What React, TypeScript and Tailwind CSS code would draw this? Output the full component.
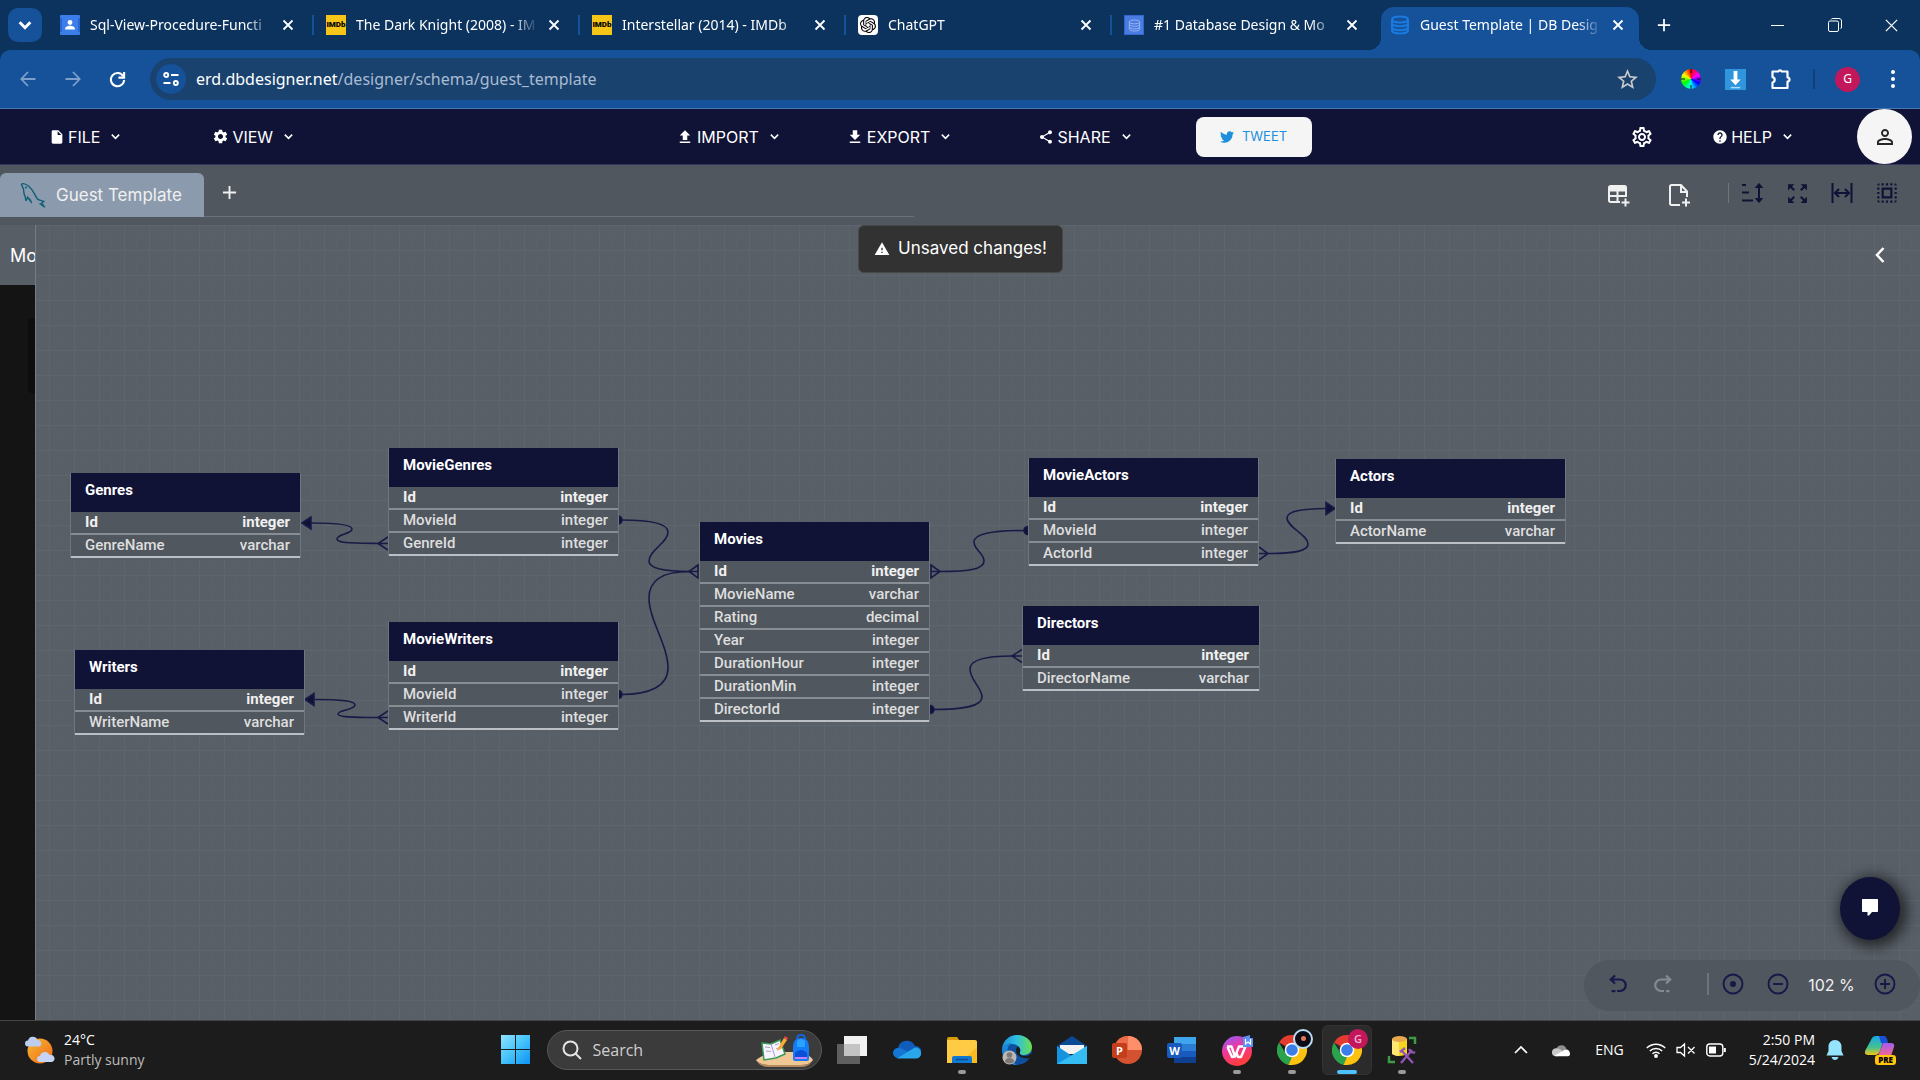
import React from "react";
import {
  MdInsertDriveFile, MdSettings, MdOutlineSettings, MdUpload, MdDownload, MdShare, MdHelp,
  MdWarning, MdZoomOutMap, MdSelectAll, MdPersonOutline, MdStarBorder,
} from "react-icons/md";
import { FaTwitter } from "react-icons/fa";
import { SiOpenai } from "react-icons/si";

type Svg = { className?: string };

const BROWSER = "font-['Noto_Sans','Open_Sans',sans-serif]";
const SYSTEM = "font-['Open_Sans','Noto_Sans',sans-serif]";
const APP = "font-['Inter','Open_Sans',sans-serif]";

/* ---------- favicons ---------- */
const ContactFavicon = () => (
  <svg viewBox="0 0 20 20" className="size-5">
    <rect width="20" height="20" rx="1" fill="#3b7de9" />
    <rect y="3" width="20" height="14" fill="#2a66d0" />
    <rect x="2" y="1" width="16" height="18" fill="#3b7de9" />
    <circle cx="10" cy="7.5" r="2.4" fill="#fff" />
    <path d="M5 14.5c0-3 2.6-3.8 5-3.8s5 .8 5 3.8z" fill="#fff" />
  </svg>
);
const ImdbFavicon = () => (
  <span className="flex size-5 items-center justify-center bg-[#f5c518] font-[Roboto,sans-serif] text-[8px] leading-none font-black text-black">IMDb</span>
);
const ChatGptFavicon = () => (
  <span className="flex size-5 items-center justify-center rounded-[4px] bg-white text-black"><SiOpenai size={16} /></span>
);
const Stack = ({ className }: Svg) => (
  <svg viewBox="0 0 20 20" className={className} fill="none" stroke="currentColor">
    <ellipse cx="10" cy="4.5" rx="8" ry="3" />
    <path d="M2 4.500v3.700c0 1.700 3.600 3 8 3s8-1.300 8-3V4.500M2 8.500v3.700c0 1.700 3.600 3 8 3s8-1.300 8-3V8.500M2 12.300v3.200c0 1.700 3.600 3 8 3s8-1.300 8-3v-3.200" />
  </svg>
);
const DesignFavicon = () => (
  <span className="flex size-5 items-center justify-center border border-[#3565cf] bg-[#4a7be0] text-[#b9d0ff]"><Stack className="size-[13px]" /></span>
);
const DbFavicon = () => <Stack className="size-5 stroke-2 text-[#1a7ae0]" />;

const Close = ({ className }: Svg) => (
  <svg viewBox="0 0 12 12" className={className} fill="none" stroke="currentColor" strokeWidth="1.8">
    <path d="M1.500 1.500l9 9M10.500 1.500l-9 9" />
  </svg>
);
const Down = ({ className }: Svg) => (
  <svg viewBox="0 0 12 12" className={className} fill="none" stroke="currentColor" strokeWidth="1.700">
    <path d="M2 4l4 4 4-4" />
  </svg>
);
const Plus = ({ className }: Svg) => (
  <svg viewBox="0 0 16 16" className={className} fill="none" stroke="currentColor" strokeWidth="2">
    <path d="M8 1v14M1 8h14" />
  </svg>
);

/* ---------- browser ---------- */
const TABS = [
  { title: "Sql-View-Procedure-Functi", icon: <ContactFavicon /> },
  { title: "The Dark Knight (2008) - IM", icon: <ImdbFavicon /> },
  { title: "Interstellar (2014) - IMDb", icon: <ImdbFavicon /> },
  { title: "ChatGPT", icon: <ChatGptFavicon /> },
  { title: "#1 Database Design & Mo", icon: <DesignFavicon /> },
  { title: "Guest Template | DB Desig", icon: <DbFavicon />, active: true },
];

function TabStrip() {
  return (
    <div className={"flex h-[50px] items-stretch bg-[#0c335e] pl-2 text-white " + BROWSER}>
      <button aria-label="Search tabs" className="mt-2 mr-[6px] flex h-[34px] w-[34px] items-center justify-center rounded-[10px] bg-[#15529a]">
        <Down className="size-4 stroke-[2.200]" />
      </button>
      {TABS.map((t, i) => (
        <div key={i} className="relative flex w-[266px] min-w-0 items-stretch">
          {t.active && (
            <>
              <span className="absolute inset-y-0 right-[5px] left-[3px] mt-[7px] rounded-t-[13px] bg-[#15529a]" />
              <span className="absolute bottom-0 left-[-9px] size-3 bg-[radial-gradient(circle_at_0_0,transparent_12px,#15529a_12px)]" />
              <span className="absolute right-[-7px] bottom-0 size-3 bg-[radial-gradient(circle_at_100%_0,transparent_12px,#15529a_12px)]" />
            </>
          )}
          <div className="relative flex min-w-0 flex-1 items-center pr-4 pl-3">
            <span className="shrink-0">{t.icon}</span>
            <span className="ml-[10px] min-w-0 flex-1 overflow-hidden text-[14px] leading-5 whitespace-nowrap [mask-image:linear-gradient(to_right,black_86%,transparent)]">
              {t.title}
            </span>
            <button aria-label={"Close " + t.title} className="ml-2 flex size-4 shrink-0 items-center justify-center"><Close className="size-3" /></button>
          </div>
          <span className={"my-[15px] w-[2px] shrink-0 " + (i < 4 ? "bg-[#15529a]" : "")} />
        </div>
      ))}
      <button aria-label="New tab" className="ml-1 flex w-8 items-center justify-center"><Plus className="size-[14px]" /></button>
      <div className="ml-auto flex">
        <button aria-label="Minimize" className="flex w-[57px] items-center justify-center"><span className="h-px w-[13px] bg-white" /></button>
        <button aria-label="Restore" className="flex w-[57px] items-center justify-center">
          <svg viewBox="0 0 14 14" className="size-[14px]" fill="none" stroke="currentColor"><rect x=".5" y="3" width="10" height="10.500" rx="1.500" /><path d="M3 1.500c.3-.7 1-1 1.800-1H11c1.500 0 2.500 1 2.500 2.500v6c0 .8-.4 1.500-1 1.800" /></svg>
        </button>
        <button aria-label="Close window" className="flex w-[57px] items-center justify-center"><Close className="size-[15px] stroke-1" /></button>
      </div>
    </div>
  );
}

const Slot = ({ label, children, className = "" }: { label: string; children: React.ReactNode; className?: string }) => (
  <button aria-label={label} className={"flex h-[42px] w-[45px] shrink-0 items-center justify-center " + className}>{children}</button>
);

function AddressBar() {
  return (
    <div className={"bg-[#0c335e] " + BROWSER}>
      <div className="flex h-[59px] items-center rounded-t-[10px] border-b border-[#4377b4] bg-[#15529a] px-[5px] text-white">
        <Slot label="Back" className="text-[#7d9fca]">
          <svg viewBox="0 0 16 16" className="size-4" fill="none" stroke="currentColor" strokeWidth="1.800"><path d="M15.500 8H1.500M8 1L1.300 8 8 15" /></svg>
        </Slot>
        <Slot label="Forward" className="text-[#7d9fca]">
          <svg viewBox="0 0 16 16" className="size-4" fill="none" stroke="currentColor" strokeWidth="1.800"><path d="M.5 8h14M8 1l6.700 7L8 15" /></svg>
        </Slot>
        <Slot label="Reload">
          <svg viewBox="0 0 18 18" className="size-[17px]" fill="none" stroke="currentColor" strokeWidth="2.200"><path d="M15 5.500A7 7 0 1 0 16 9.500" /><path d="M16 1v6h-6" /></svg>
        </Slot>
        <div className="ml-[10px] flex h-[42px] min-w-0 flex-1 items-center rounded-full bg-[#19426f] pr-4 pl-[6px]">
          <button aria-label="Site information" className="flex size-[30px] items-center justify-center rounded-full bg-[#15529a]">
            <svg viewBox="0 0 16 16" className="size-4" fill="none" stroke="currentColor" strokeWidth="1.900"><circle cx="3.200" cy="4" r="2" /><path d="M8 4h7.500M.5 12h7" /><circle cx="12.800" cy="12" r="2" /></svg>
          </button>
          <label htmlFor="url" className="ml-[10px] text-[16px] leading-6">erd.dbdesigner.net</label>
          <input id="url" defaultValue="/designer/schema/guest_template" className="min-w-0 flex-1 bg-transparent text-[16px] leading-6 text-[#a9bbd1] outline-none" />
          <button aria-label="Bookmark"><MdStarBorder size={25} className="text-[#c8c9cc]" /></button>
        </div>
        <Slot label="Color picker" className="ml-3">
          <span className="flex size-5 items-center justify-center rounded-full bg-[conic-gradient(#f00,#f0f,#00f,#0ff,#0f0,#ff0,#f00)]">
            <svg viewBox="0 0 20 20" className="size-5" stroke="#111"><path d="M10 0v4M10 16v4M0 10h4M16 10h4" /></svg>
          </span>
        </Slot>
        <Slot label="Download extension">
          <svg viewBox="0 0 22 22" className="size-[21px]"><rect width="22" height="22" fill="#2f95dc" /><path d="M9 2h4v9h3.500L11 17l-5.500-6H9z" fill="#fff" /><path d="M6 19.500h10" stroke="#a8dcff" strokeWidth="1.500" /></svg>
        </Slot>
        <Slot label="Extensions">
          <svg viewBox="0 0 22 22" className="size-[22px]" fill="none" stroke="currentColor" strokeWidth="2.200" strokeLinejoin="round">
            <path d="M2.500 3.500h5.700a2 2 0 0 1 3.600 0h5.700v6a2 2 0 0 1 0 4v6.500h-15v-5.500a2.700 2.700 0 0 0 0-5.300z" />
          </svg>
        </Slot>
        <span className="mx-[10px] h-5 w-[2px] bg-[#0f4178]" />
        <Slot label="Profile"><span className="flex size-[25px] items-center justify-center rounded-full bg-[#c2185b] text-[12px] leading-none">G</span></Slot>
        <Slot label="Menu">
          <svg viewBox="0 0 4 18" className="h-[18px] w-1" fill="currentColor"><circle cx="2" cy="2" r="2" /><circle cx="2" cy="9" r="2" /><circle cx="2" cy="16" r="2" /></svg>
        </Slot>
      </div>
    </div>
  );
}

/* ---------- application header ---------- */
const MenuButton = ({ icon, label }: { icon: React.ReactNode; label: string }) => (
  <button className="flex items-center text-[16px] leading-6 text-white">
    {icon}
    <span className="ml-[3px]">{label}</span>
    <Down className="ml-[10px] size-[11px]" />
  </button>
);

function AppHeader() {
  return (
    <header className="flex h-14 items-center border-b border-[#34365a] bg-[#101236]">
      <nav className="flex w-[35%] shrink-0 items-center gap-[91px] pl-[49px]">
        <MenuButton icon={<MdInsertDriveFile size={16} />} label="FILE" />
        <MenuButton icon={<MdSettings size={17} />} label="VIEW" />
      </nav>
      <nav className="flex items-center pl-1">
        <MenuButton icon={<MdUpload size={18} />} label="IMPORT" />
        <span className="w-[66px]" />
        <MenuButton icon={<MdDownload size={18} />} label="EXPORT" />
        <span className="w-[87px]" />
        <MenuButton icon={<MdShare size={16} />} label="SHARE" />
        <button className="ml-16 flex h-10 w-[116px] items-center justify-center gap-2 rounded-lg bg-[#f5f5f5] text-[13px] text-[#1d8fdc]">
          <FaTwitter size={14} />TWEET
        </button>
      </nav>
      <div className="ml-auto flex items-center pr-2">
        <button aria-label="Settings" className="mr-[58px] text-white"><MdOutlineSettings size={24} /></button>
        <MenuButton icon={<MdHelp size={16} />} label="HELP" />
        <button aria-label="Account" className="ml-16 flex size-[55px] items-center justify-center rounded-full bg-[#f5f5f5] text-[#262626]">
          <MdPersonOutline size={24} />
        </button>
      </div>
    </header>
  );
}

function SchemaBar() {
  return (
    <div className="flex h-[60px] items-start bg-[#50575e] pt-2 text-[#f0f0f0]">
      <div className="flex w-[47.6%] items-start">
        <button className="flex h-[44px] w-[204px] items-center rounded-t-md bg-[#8b9bad] pl-5 text-[17px]">
          <svg viewBox="0 0 26 26" className="size-[26px] shrink-0" fill="none" stroke="#115e78" strokeWidth="1.400" strokeLinejoin="round">
            <path d="M1.500 2c2-1 5 .5 7 2 5 4 6 9 9 13 1.500 1.500 4 1.500 6.500 2.500l-2.500 1.500 3 4-5-3.500M1.500 2c0 2 1.500 3 2 5 .5 3 0 5 1.500 7 .5 1.500.5 3.500 1 4.500 1 0 1-2 1.500-3.500l4 5.500-2-4" />
            <circle cx="6" cy="5.500" r=".4" />
          </svg>
          <span className="mt-[2px] ml-[10px]">Guest Template</span>
        </button>
        <div className="flex h-[44px] flex-1 items-center border-b border-[#6a717a] pb-1 pl-[18px]">
          <button aria-label="Add schema"><Plus className="size-[15px]" /></button>
        </div>
      </div>
      <div className="ml-auto flex h-[44px] items-center pr-5 pb-1 text-[#101236]">
        <button aria-label="Add table" className="mt-1 text-[#f0f0f0]">
          <svg viewBox="0 0 24 24" className="size-6" fill="none" stroke="currentColor" strokeWidth="2"><path d="M14 19H4.500c-.8 0-1.500-.7-1.500-1.500v-13C3 3.700 3.700 3 4.500 3h14c.8 0 1.500.7 1.500 1.500V14M3 13h17M11.500 6v13M3 7.500h17" /><path d="M3 5h17" strokeWidth="4" /><path d="M19.500 15.500v8M15.500 19.500h8" /></svg>
        </button>
        <button aria-label="Add note" className="mt-1 ml-[37px] text-[#f0f0f0]">
          <svg viewBox="0 0 24 24" className="size-6" fill="none" stroke="currentColor" strokeWidth="2"><path d="M13 22H4.500c-.8 0-1.500-.7-1.500-1.500v-17C3 2.700 3.700 2 4.500 2H14l6 6.500V14M14 2v7h6M19 15.500v8M15 19.500h8" /></svg>
        </button>
        <span className="ml-[37px] h-5 w-px bg-[#6f767e]" />
        <button aria-label="Vertical spacing" className="ml-3">
          <svg viewBox="0 0 22 22" className="size-[22px]" fill="none" stroke="currentColor" strokeWidth="2"><path d="M1 3h4M1 10.500h7M1 18.500h11M18 2v18" /><path d="M14.500 5.500L18 1.500l3.500 4zM14.500 16.500l3.500 4 3.500-4z" fill="currentColor" strokeWidth="1" /></svg>
        </button>
        <button aria-label="Full screen" className="ml-[22px]"><MdZoomOutMap size={25} /></button>
        <button aria-label="Fit width" className="ml-[21px]">
          <svg viewBox="0 0 22 22" className="size-[22px]" fill="none" stroke="currentColor" strokeWidth="2"><path d="M1.500 1v20M20.500 1v20M4.500 11h13M8 7l-4 4 4 4M14 7l4 4-4 4" /></svg>
        </button>
        <button aria-label="Select all" className="ml-[21px]"><MdSelectAll size={26} /></button>
      </div>
    </div>
  );
}

/* ---------- diagram ---------- */
type Col = [string, string];
const NODES: { name: string; x: number; y: number; w: number; cols: Col[] }[] = [
  { name: "Genres", x: 70, y: 473, w: 231, cols: [["Id", "integer"], ["GenreName", "varchar"]] },
  { name: "Writers", x: 74, y: 650, w: 231, cols: [["Id", "integer"], ["WriterName", "varchar"]] },
  { name: "MovieGenres", x: 388, y: 448, w: 231, cols: [["Id", "integer"], ["MovieId", "integer"], ["GenreId", "integer"]] },
  { name: "MovieWriters", x: 388, y: 622, w: 231, cols: [["Id", "integer"], ["MovieId", "integer"], ["WriterId", "integer"]] },
  { name: "Movies", x: 699, y: 522, w: 231, cols: [["Id", "integer"], ["MovieName", "varchar"], ["Rating", "decimal"], ["Year", "integer"], ["DurationHour", "integer"], ["DurationMin", "integer"], ["DirectorId", "integer"]] },
  { name: "MovieActors", x: 1028, y: 458, w: 231, cols: [["Id", "integer"], ["MovieId", "integer"], ["ActorId", "integer"]] },
  { name: "Actors", x: 1335, y: 459, w: 231, cols: [["Id", "integer"], ["ActorName", "varchar"]] },
  { name: "Directors", x: 1022, y: 606, w: 238, cols: [["Id", "integer"], ["DirectorName", "varchar"]] },
];
const ORIGIN = { x: 36, y: 225 };

const Relations = () => (
  <svg className="pointer-events-none absolute inset-0 size-full" fill="none" stroke="#191b47" strokeWidth="1.600">
    <g transform={`translate(${-ORIGIN.x} ${-ORIGIN.y})`}>
      <path d="M311 523C340 523 352 525 352 529C352 534 337 534 337 539C337 543 350 543 378 543.500" />
      <path d="M315 699.500C342 699.500 355 701 355 705C355 710 338 710 338 714C338 717 352 717.500 378 717.500" />
      <path d="M621 520C650 520 668 523 668 532C668 543 649 550 649 561C649 569 668 571.500 690 571.500" />
      <path d="M621 694.500C650 694.500 668 686 668 668C668 645 649 620 649 598C649 580 662 571.500 690 571.500" />
      <path d="M940 571.500C970 571.500 984 569 984 561C984 553 974 550 974 542C974 534 990 530.500 1026 530.500" />
      <path d="M932 709.500C965 709.500 982 706 982 697C982 688 970 680 970 669C970 660 984 656 1012 656" />
      <path d="M1268 553.500C1295 553.500 1308 551 1308 544C1308 535 1287 527 1287 518C1287 510 1305 509 1326 508.500" />
      <g fill="#101236">
        <path d="M302 523l9-6v12zM305 699.500l9-6v12zM1335 508.500l-9-6v12z" />
        <path d="M618 516a4 4 0 0 1 0 8zM618 690.500a4 4 0 0 1 0 8zM930 705.500a4 4 0 0 1 0 8zM1028 526.500a4 4 0 0 0 0 8z" />
      </g>
      <path d="M388 537l-10 6.500 10 6.500M378 543.500h10M388 711l-10 6.500 10 6.500M378 717.500h10" />
      <path d="M698 565l-9 6.500 9 6.500zM689 571.500h9M931 565l9 6.500-9 6.500zM940 571.500h-9" />
      <path d="M1022 649.500l-10 6.500 10 6.500M1012 656h10M1259 547l9 6.500-9 6.500M1268 553.500h-9" />
    </g>
  </svg>
);

function Entity({ n }: { n: (typeof NODES)[number] }) {
  return (
    <section
      className="absolute border-x border-[#6f767e] bg-[#50575e] font-[Roboto,sans-serif] text-[15px] text-[#dedede]"
      style={{ left: n.x - ORIGIN.x, top: n.y - ORIGIN.y, width: n.w }}
    >
      <h2 className="flex h-[39px] items-center bg-[#101236] px-[14px] pb-1 font-bold text-white">{n.name}</h2>
      <table className="w-full border-separate border-spacing-0">
        <tbody>
          {n.cols.map(([c, t], i) => (
            <tr key={c} className={"leading-[21px] " + (i === 0 ? "font-bold text-[#f0f0f0]" : "font-medium")}>
              <td className={"border-b-2 py-0 pl-[14px] " + (i === n.cols.length - 1 ? "border-[#bcc0c4]" : "border-[#888d94]")}>{c}</td>
              <td className={"border-b-2 py-0 pr-[10px] text-right " + (i === n.cols.length - 1 ? "border-[#bcc0c4]" : "border-[#888d94]")}>{t}</td>
            </tr>
          ))}
        </tbody>
      </table>
    </section>
  );
}

function Canvas() {
  return (
    <main className="flex min-h-[600px] flex-1">
      <aside className="flex w-9 shrink-0 flex-col overflow-hidden border-r border-[#757c85] bg-[#141414]">
        <div className="flex h-[60px] items-center overflow-hidden bg-[#575e66] pl-[10px] text-[18px] whitespace-nowrap text-white">Mo</div>
        <div className="mt-[33px] ml-7 h-[75px] rounded-l bg-[#0d0d0e]" />
      </aside>
      <div className="relative min-w-0 flex-1 overflow-hidden bg-[#585f67] bg-[linear-gradient(#5e656d_1px,transparent_1px),linear-gradient(90deg,#5e656d_1px,transparent_1px),linear-gradient(transparent_12px,#5a616a_12px,#5a616a_13px,transparent_13px),linear-gradient(90deg,transparent_12px,#5a616a_12px,#5a616a_13px,transparent_13px)] bg-size-[25px_25px] bg-position-[13px_0]">
        <Relations />
        {NODES.map((n) => <Entity key={n.name} n={n} />)}
        <div role="status" className="absolute top-0 left-[822px] flex h-12 w-[205px] items-center justify-center gap-2 rounded-md border border-[#484848] bg-[#323232] text-[17px] text-white">
          <MdWarning size={16} />Unsaved changes!
        </div>
        <button aria-label="Open side panel" className="absolute top-[21px] right-[35px] text-white">
          <svg viewBox="0 0 10 18" className="h-[18px] w-[10px]" fill="none" stroke="currentColor" strokeWidth="2.500"><path d="M8.500 2L2 9l6.500 7" /></svg>
        </button>
        <button aria-label="Chat" className="absolute right-5 bottom-20 flex h-[63px] w-[60px] items-center justify-center rounded-[50%] bg-[#101236] pb-1 shadow-[3px_3px_14px_4px_rgba(0,0,0,0.6)]">
          <svg viewBox="0 0 18 18" className="size-[18px]" fill="#fff"><path d="M2 1h14c.6 0 1 .4 1 1v11c0 .6-.4 1-1 1h-5l-3 3.500h-1.500V14H2c-.6 0-1-.4-1-1V2c0-.6.4-1 1-1z" /></svg>
        </button>
        <div className="absolute right-0 bottom-[9px] flex h-[51px] w-[336px] items-center rounded-full bg-[#50575e] pr-6 pb-1 pl-[25px] text-[#17194a]">
          <button aria-label="Undo">
            <svg viewBox="0 0 18 20" className="h-5 w-[18px]" fill="none" stroke="currentColor" strokeWidth="2.200"><path d="M6 1.500L1.800 5.500 6 9.500M2 5.500h9a5.500 5.500 0 0 1 0 11.500H8" /><path d="M5.500 17.200h-2" strokeLinecap="round" strokeDasharray="2 3" /></svg>
          </button>
          <button aria-label="Redo" className="ml-[27px] text-[#858b93]">
            <svg viewBox="0 0 18 20" className="h-5 w-[18px]" fill="none" stroke="currentColor" strokeWidth="2.200"><path d="M12 1.500l4.200 4-4.200 4M16 5.500H7a5.500 5.500 0 0 0 0 11.500h3" /><path d="M13 17.200h1.500" strokeLinecap="round" /></svg>
          </button>
          <span className="ml-[35px] h-[22px] w-[2px] bg-[#6d747c]" />
          <button aria-label="Center" className="ml-[13px]">
            <svg viewBox="0 0 22 22" className="size-[22px]" fill="none" stroke="currentColor" strokeWidth="1.900"><circle cx="11" cy="11" r="9.500" /><circle cx="11" cy="11" r="3" fill="currentColor" stroke="none" /></svg>
          </button>
          <button aria-label="Zoom out" className="ml-[23px]">
            <svg viewBox="0 0 22 22" className="size-[22px]" fill="none" stroke="currentColor" strokeWidth="1.900"><circle cx="11" cy="11" r="9.500" /><path d="M6 11h10" /></svg>
          </button>
          <span className="mt-[2px] flex-1 text-center text-[16px] text-[#f0f0f0]">102 %</span>
          <button aria-label="Zoom in">
            <svg viewBox="0 0 22 22" className="size-[22px]" fill="none" stroke="currentColor" strokeWidth="1.900"><circle cx="11" cy="11" r="9.500" /><path d="M6 11h10M11 6v10" /></svg>
          </button>
        </div>
      </div>
    </main>
  );
}

/* ---------- taskbar ---------- */
const Weather = () => (
  <svg viewBox="0 0 30 30" className="size-[30px]">
    <defs><linearGradient id="sun" x1="0" y1="0" x2="1" y2="1"><stop stopColor="#f7b733" /><stop offset="1" stopColor="#f06a1a" /></linearGradient></defs>
    <circle cx="15" cy="16" r="12.500" fill="url(#sun)" />
    <path d="M3 11.500a3 3 0 0 1 0-6 5 5 0 0 1 9.500-.5 3.500 3.500 0 0 1 2 6.500z" fill="#bccdf0" />
    <path d="M15 27a3 3 0 0 1 0-6 5 5 0 0 1 9.500-1 3.500 3.500 0 0 1 2.500 7z" fill="#c5d4f4" />
  </svg>
);
const Start = () => (
  <svg viewBox="0 0 29 29" className="size-[29px]">
    <defs><linearGradient id="win" x1="0" y1="0" x2="1" y2="1"><stop stopColor="#8fe3ff" /><stop offset=".5" stopColor="#45c3fb" /><stop offset="1" stopColor="#0c93f5" /></linearGradient></defs>
    <path d="M0 0h14v14H0zM15 0h14v14H15zM0 15h14v14H0zM15 15h14v14H15z" fill="url(#win)" />
  </svg>
);
const SearchArt = () => (
  <svg viewBox="0 0 58 34" className="h-[34px] w-[58px]">
    <path d="M0 27q8-7 25-8h20q9 3 12 8-3 5-12 5H12Q3 32 0 27z" fill="#f0c795" /><path d="M1 28q5 4 12 4h32q8 0 11-4-3 6-11 6H13Q4 34 1 28z" fill="#b58a5e" />
    <path d="M6 10l9 1 9-4 5 14-9 4-12 2z" fill="#f7f4ff" stroke="#3c9a56" strokeWidth="1.500" /><path d="M15 11l4 13M9 14l5 .5M10 18l5 .5M19 12l4-1.500M20 16l5-2" stroke="#a79ec0" />
    <path d="M22 15l6-10 3 2-6 9-4 2z" fill="#fbab35" /><path d="M28 5l1-2 3 2-1 2z" fill="#ee4540" />
    <path d="M41 6q0-4 4-4t4 4" fill="none" stroke="#1565d8" strokeWidth="2" /><path d="M37 14q0-9 8-9t8 9v12q0 2-2 2H39q-2 0-2-2z" fill="#157cf5" /><path d="M41 8q4-4 8 0v6h-8z" fill="#29a3ff" /><path d="M39 20q6-6 12 0v5q-6 2-12 0z" fill="#0b4fd8" /><path d="M39 25h12" stroke="#c77dff" strokeWidth="2" />
  </svg>
);
const TaskView = () => (
  <svg viewBox="0 0 30 30" className="size-[30px]"><rect y="9" width="23" height="20" fill="#5f5f5f" /><rect x="7" y="1" width="23" height="20" fill="#f1f1f1" /><rect x="7" y="9" width="16" height="12" fill="#c4c4c4" /></svg>
);
const OneDrive = () => (
  <svg viewBox="0 0 28 20" className="h-5 w-7"><path d="M5 18a5 5 0 0 1 0-10 9 9 0 0 1 17-2 6 6 0 0 1 1 12z" fill="#0f5db8" /><path d="M0 13a6 6 0 0 1 6-5q3 0 9 4L6 18q-5 0-6-5z" fill="#1477d3" /><path d="M4 18.500L16 11l6-3.500c8 0 8 11 1 11z" fill="#28a8ea" /></svg>
);
const Explorer = () => (
  <svg viewBox="0 0 30 30" className="size-[30px]"><path d="M0 4q0-2 2-2h8l3 4H0z" fill="#d79b0b" /><path d="M0 5h28q2 0 2 2v21H0z" fill="#ffcb45" /><path d="M13 28h17V12z" fill="#f9bb20" /><path d="M5 28v-5q0-2 2-2h16q2 0 2 2v5z" fill="#0f78d0" /><path d="M9 24.500h12" stroke="#0a4d92" strokeWidth="1.500" /></svg>
);
const Edge = () => (
  <svg viewBox="0 0 30 30" className="size-[30px]">
    <defs><linearGradient id="edge"><stop stopColor="#1a90dc" /><stop offset=".5" stopColor="#30bfe0" /><stop offset="1" stopColor="#6be04a" /></linearGradient></defs>
    <circle cx="15" cy="15" r="15" fill="#0e4f9f" /><path d="M0 14C1 5 8 0 15 0c9 0 15 6 15 12 0 5-4 8-8 8-3 0-5-1-4-3 1-4-3-8-8-8-5 0-9 3-10 5z" fill="url(#edge)" />
    <path d="M0 14c1-4 5-6 10-6-4 2-5 6-4 10 1 5 4 9 9 12C6 30 0 23 0 14z" fill="#1b86d6" /><path d="M18 17c-1 2 1 4 5 4 3 0 5-1 6-3l1 2-2 3c-6 1-14-1-14-8 0-2 1-3 2-4 2 2 3 4 2 6z" fill="#1c1c1c" />
    <circle cx="7.500" cy="22.500" r="7" fill="#bcb8b5" /><circle cx="7.500" cy="20" r="2.800" fill="#7d7976" /><path d="M3 27q0-4 4.500-4t4.500 4q-4 3-9 0z" fill="#7d7976" />
  </svg>
);
const Mail = () => (
  <svg viewBox="0 0 30 30" className="size-[30px]"><path d="M0 11L15 1l15 10v5H0z" fill="#0a4a94" /><path d="M3 10h24v9H3z" fill="#f2f2f2" /><path d="M0 11l15 10L30 11v18H0z" fill="#1593de" /><path d="M0 29l15-9 15-9v18z" fill="#33bdf2" /></svg>
);
const OfficeBadge = ({ children, className }: { children: React.ReactNode; className: string }) => (
  <span className={"absolute top-[8px] left-0 flex size-[15px] items-center justify-center rounded-[2px] text-[11px] leading-none font-bold text-white " + className}>{children}</span>
);
const PowerPoint = () => (
  <span className="relative block size-[30px]">
    <svg viewBox="0 0 30 30" className="size-[30px]"><circle cx="16" cy="15" r="14" fill="#d35230" /><path d="M16 1a14 14 0 0 1 14 14H16z" fill="#ff8f6b" /><path d="M16 1v14H2A14 14 0 0 1 16 1z" fill="#ed6c47" /></svg>
    <OfficeBadge className="bg-[#c43e1c]">P</OfficeBadge>
  </span>
);
const Word = () => (
  <span className="relative block size-[30px]">
    <svg viewBox="0 0 30 30" className="size-[30px]"><path d="M7 2h22v7H7z" fill="#41a5ee" /><path d="M7 9h22v7H7z" fill="#2b7cd3" /><path d="M7 16h22v6H7z" fill="#185abd" /><path d="M7 22h22v6H7z" fill="#103f91" /></svg>
    <OfficeBadge className="bg-[#185abd]">W</OfficeBadge>
  </span>
);
const Wps = () => (
  <svg viewBox="0 0 32 32" className="size-8">
    <defs><linearGradient id="wps" x1="0" y1="0" x2=".4" y2="1"><stop stopColor="#8a5cff" /><stop offset=".5" stopColor="#f0389c" /><stop offset="1" stopColor="#ff3d3d" /></linearGradient></defs>
    <circle cx="16" cy="17" r="15" fill="url(#wps)" />
    <path d="M6 12.500h4.500l3.500 10 4-10h6.500l-4.500 10.500h-3l-1.500-4M14 22.500l-3 .5-4.500-10" fill="none" stroke="#fff" strokeWidth="2.400" strokeLinejoin="round" />
    <path d="M22 3l7-2v3h3v9H22z" fill="#5b8ff5" /><path d="M24.500 5v5l2.500-2 2.500 2V5" fill="none" stroke="#fff" strokeWidth="1.200" />
  </svg>
);
const ChromeMark = () => (
  <svg viewBox="0 0 30 30" className="size-[30px]">
    <path d="M15 15L2 7.500A15 15 0 0 1 28 7.500z" fill="#e33b2e" /><path d="M15 0a15 15 0 0 1 13 7.500H15z" fill="#e33b2e" />
    <path d="M15 15l13-7.500A15 15 0 0 1 15 30l-1 0z" fill="#fdc10f" /><path d="M2 7.500L9 19l6 3-3 8A15 15 0 0 1 2 7.500z" fill="#2ba24c" />
    <path d="M15 22l6.500-3L15 30h-3.500z" fill="#fdc10f" /><circle cx="15" cy="15" r="7.300" fill="#fff" /><circle cx="15" cy="15" r="5.800" fill="#3b7de9" />
  </svg>
);
const Chrome = ({ user }: { user?: boolean }) => (
  <span className="relative block">
    <ChromeMark />
    {user ? (
      <span className="absolute -top-[6px] left-4 flex size-5 items-center justify-center rounded-full bg-[#c2185b] text-[11px] leading-none font-semibold text-[#f3b6cd]">G</span>
    ) : (
      <span className="absolute -top-[6px] left-4 flex size-5 items-center justify-center rounded-full border-2 border-[#b9dcf5] bg-[#0c0c18]"><span className="size-[5px] rounded-full bg-[#e07a5a]" /></span>
    )}
  </span>
);
const SqlTool = () => (
  <svg viewBox="0 0 30 30" className="size-[30px]"><path d="M5 4v15q7 4 15 0V4z" fill="#f7d51c" /><path d="M5 4v15q3 2 7 2V4z" fill="#ffe873" /><ellipse cx="12.500" cy="4" rx="7.500" ry="3" fill="#e8a64d" /><path d="M22 3h6v6M2 21v6h6" fill="none" stroke="#3d9b45" strokeWidth="2.500" /><path d="M15 16l11 12M25 15L14 28M13 17l5-4M22 14q3 5 6 3" fill="none" stroke="#9455b8" strokeWidth="2.300" /></svg>
);

const APPS: { label: string; icon: React.ReactNode; state?: "open" | "active" }[] = [
  { label: "Task view", icon: <TaskView /> },
  { label: "OneDrive", icon: <OneDrive /> },
  { label: "File Explorer", icon: <Explorer />, state: "open" },
  { label: "Edge", icon: <Edge /> },
  { label: "Mail", icon: <Mail /> },
  { label: "PowerPoint", icon: <PowerPoint /> },
  { label: "Word", icon: <Word /> },
  { label: "WPS Office", icon: <Wps />, state: "open" },
  { label: "Chrome", icon: <Chrome />, state: "open" },
  { label: "Chrome, profile G", icon: <Chrome user />, state: "active" },
  { label: "SQL tools", icon: <SqlTool />, state: "open" },
];

function Taskbar() {
  return (
    <footer className="flex h-[60px] items-stretch border-t border-[#444] bg-[#1c1c1c] pb-[2px] text-white">
      <div className="flex flex-1 items-center pl-[25px]">
        <Weather />
        <div className="ml-[9px] text-[14px] leading-5"><div>24°C</div><div className="text-[#bdbdbd]">Partly sunny</div></div>
      </div>
      <div className="flex items-center pl-[10px]">
        <button aria-label="Start"><Start /></button>
        <label className="mr-[3px] ml-[17px] flex h-10 w-[275px] items-center rounded-full border border-[#575757] bg-[#3b3b3b] pr-[7px] pl-[14px]">
          <svg viewBox="0 0 20 20" className="size-5 shrink-0" fill="none" stroke="#e4e4e4" strokeWidth="2"><circle cx="8.500" cy="8.500" r="7" /><path d="M13.500 13.500L19 19" /></svg>
          <input aria-label="Search" placeholder="Search" className="ml-[11px] min-w-0 flex-1 bg-transparent text-[16px] leading-5 outline-none placeholder:text-[#cfcfcf]" />
          <SearchArt />
        </label>
        {APPS.map((a) => (
          <button key={a.label} aria-label={a.label} className="relative flex h-[57px] w-[55px] items-center justify-center">
            <span className={"flex size-[50px] items-center justify-center rounded-md " + (a.state === "active" ? "border border-[#333] bg-[#2b2b2b]" : "")}>{a.icon}</span>
            {a.state && <span className={"absolute bottom-1 h-1 rounded-full " + (a.state === "active" ? "w-5 bg-[#4cc2ff]" : "w-2 bg-[#9a9a9a]")} />}
          </button>
        ))}
      </div>
      <div className="flex flex-1 items-center justify-end pr-[25px]">
        <button aria-label="Hidden icons"><svg viewBox="0 0 16 10" className="h-[10px] w-4" fill="none" stroke="#fff" strokeWidth="1.700"><path d="M2 8l6-6 6 6" /></svg></button>
        <svg viewBox="0 0 22 14" className="ml-[22px] h-[14px] w-5"><path d="M6 5a6 6 0 0 1 11 1l-4 3z" fill="#8f8f8f" /><path d="M1 10q0-5 5-5 4 0 9 5l-8 4Q1 14 1 10z" fill="#c9c9c9" /><path d="M4 13l9-5q4-3 7 0 3 6-3 6H6z" fill="#fff" /></svg>
        <span className="ml-6 text-[14px]">ENG</span>
        <svg viewBox="0 0 20 16" className="ml-[22px] h-4 w-5" fill="none" stroke="#fff" strokeWidth="1.500"><path d="M.8 6a13 13 0 0 1 18.400 0M3.800 9a9 9 0 0 1 12.400 0M6.500 11.800a5 5 0 0 1 7 0" /><circle cx="10" cy="14" r="1.200" fill="#fff" /></svg>
        <svg viewBox="0 0 20 16" className="ml-[10px] h-4 w-5" fill="none" stroke="#fff" strokeWidth="1.300"><path d="M1 5.500h3.500L8.500 2v12l-4-3.500H1zM12 5l6.500 6.500M18.500 5L12 11.500" /></svg>
        <svg viewBox="0 0 20 14" className="ml-[10px] h-[14px] w-5" fill="none" stroke="#fff" strokeWidth="1.400"><rect x=".8" y="1" width="16" height="12" rx="3" /><rect x="3" y="3.500" width="7" height="7" fill="#fff" stroke="none" /><path d="M18.800 5v4" strokeWidth="2" /></svg>
        <div className="ml-[23px] text-right text-[14px] leading-5"><div>2:50 PM</div><div>5/24/2024</div></div>
        <svg viewBox="0 0 18 20" className="ml-[11px] h-5 w-[18px]" fill="#93e4fc"><path d="M9 0c4 0 6.500 3 6.500 6.500V11l2 4.500H.5l2-4.500V6.500C2.500 3 5 0 9 0zM5.500 17h7q-1 3-3.500 3t-3.500-3z" /></svg>
        <span className="relative ml-[21px] block size-[30px]">
          <svg viewBox="0 0 30 30" className="size-[30px]">
            <defs><linearGradient id="cpa" x1="0" y1="0" x2="0" y2="1"><stop stopColor="#17a8e8" /><stop offset=".6" stopColor="#45c08d" /><stop offset="1" stopColor="#f5c518" /></linearGradient><linearGradient id="cpb" x1="0" y1="0" x2="0" y2="1"><stop stopColor="#a35cf0" /><stop offset="1" stopColor="#f5688a" /></linearGradient></defs>
            <path d="M6 5q1.500-4 5-4h9l-5 15q-1.500 4-5 4H3q-4 0-3-4z" fill="url(#cpa)" /><path d="M14 1h5q3 0 4 7h-7z" fill="#1c4fd8" /><path d="M18 8h8q4 0 3 4l-3 9H13z" fill="url(#cpb)" />
          </svg>
          <span className="absolute right-[-1px] bottom-0 rounded-[3px] bg-[#ffc60a] px-[3px] text-[8px] leading-[10px] font-extrabold text-black">PRE</span>
        </span>
      </div>
    </footer>
  );
}

export default function App() {
  return (
    <div className={"flex min-h-screen flex-col bg-[#141414] " + SYSTEM}>
      <TabStrip />
      <AddressBar />
      <div className={"flex flex-1 flex-col " + APP}>
        <AppHeader />
        <SchemaBar />
        <Canvas />
      </div>
      <Taskbar />
    </div>
  );
}
